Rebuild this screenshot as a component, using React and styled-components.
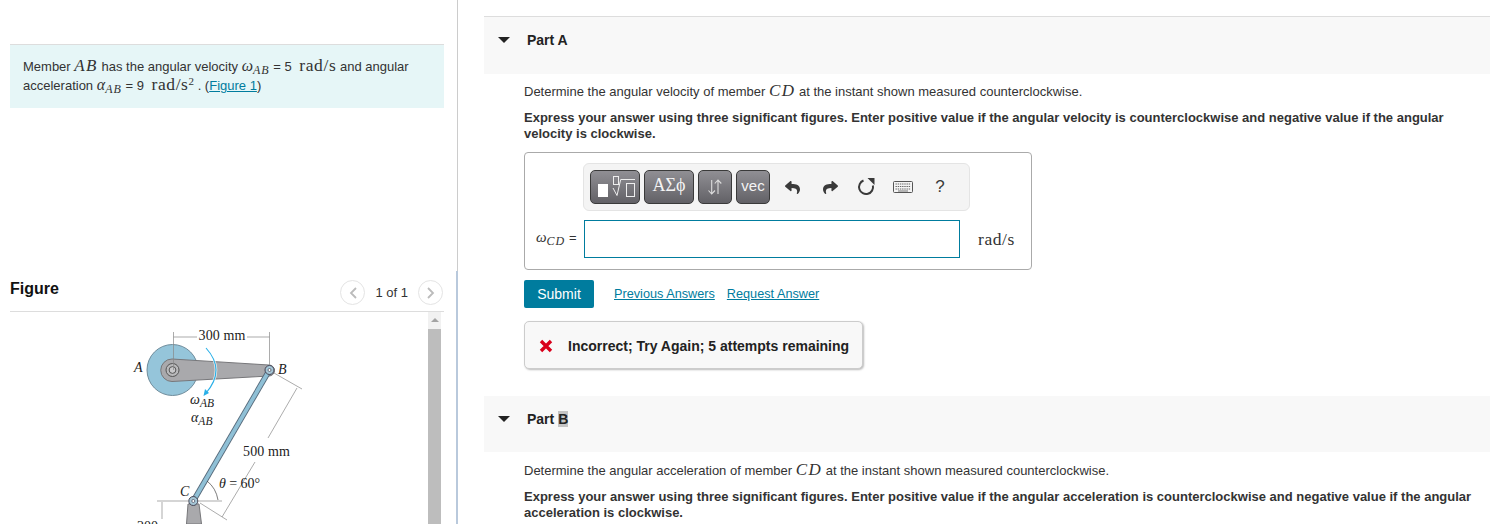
import React from "react";
import styled, { createGlobalStyle } from "styled-components";
import { FaReply, FaShare } from "react-icons/fa";

const GlobalStyle = createGlobalStyle`
  html, body {
    margin: 0;
    height: 524px;
    overflow: hidden;
    background: #fff;
  }
  body {
    font-family: "Liberation Sans", Arial, sans-serif;
    font-size: 13px;
    color: #333;
  }
`;

const Page = styled.div`
  display: flex;
  width: 1496px;
  height: 524px;
  overflow: hidden;
`;

const LeftColumn = styled.div`
  width: 458px;
  flex: none;
  display: flex;
  flex-direction: column;
  box-sizing: border-box;
  padding: 44px 13px 0 10px;
  border-right: 1px solid #ccc;
  position: relative;
`;

const SplitEdge = styled.div`
  position: absolute;
  right: -1px;
  top: 271px;
  bottom: 0;
  width: 2px;
  background: #b9c9dc;
`;

const ProblemBox = styled.div`
  height: 64px;
  box-sizing: border-box;
  border-top: 1px solid #ddd;
  background: #e6f6f7;
  padding: 12px 13px;
  line-height: 19px;
`;

const FigureHeader = styled.div`
  margin-top: 164px;
  height: 40px;
  display: flex;
  align-items: flex-start;
  justify-content: space-between;
  border-bottom: 1px solid #ddd;
  box-sizing: border-box;
`;

const FigureTitle = styled.div`
  font-size: 16px;
  font-weight: bold;
  color: #111;
  line-height: 34px;
`;

const Pager = styled.div`
  display: flex;
  align-items: center;
  gap: 10px;
  height: 27px;
  margin-top: 7px;
  margin-right: 1px;
  line-height: 27px;
`;

const PagerButton = styled.div`
  width: 25px;
  height: 25px;
  border: 1px solid #e4e4e4;
  border-radius: 50%;
  display: flex;
  align-items: center;
  justify-content: center;
  box-sizing: border-box;
`;

const FigureBody = styled.div`
  flex: 1;
  display: flex;
  min-height: 0;
`;

const FigureCanvas = styled.div`
  flex: 1;
  padding-left: 110px;
`;

const ScrollTrack = styled.div`
  width: 13px;
  margin-right: 3px;
  background: #f1f1f1;
  display: flex;
  flex-direction: column;
  align-items: center;
`;

const ScrollArrow = styled.div`
  margin: 6px 0 7px;
  width: 0;
  height: 0;
  border-left: 4px solid transparent;
  border-right: 4px solid transparent;
  border-bottom: 4px solid #a3a3a3;
`;

const ScrollThumb = styled.div`
  flex: 1;
  width: 13px;
  background: #bdbdbd;
`;

const RightColumn = styled.div`
  flex: 1;
  padding: 16px 6px 0 26px;
  min-width: 0;
`;

const PartHeader = styled.div`
  height: ${(p) => p.$height}px;
  box-sizing: border-box;
  background: #f8f8f8;
  border-top: ${(p) => (p.$ruled ? "1px solid #ddd" : "none")};
  display: flex;
  align-items: flex-start;
  padding-left: 14px;
  padding-top: ${(p) => p.$top}px;
  margin-top: ${(p) => p.$gap || 0}px;
`;

const Caret = styled.div`
  width: 0;
  height: 0;
  margin-top: 6px;
  margin-right: 17px;
  border-left: 6px solid transparent;
  border-right: 6px solid transparent;
  border-top: 6px solid #222;
`;

const PartTitle = styled.div`
  font-size: 14px;
  font-weight: bold;
  line-height: 18px;
  color: #222;
`;

const Highlight = styled.span`
  background: #c4c4c4;
`;

const PartContent = styled.div`
  padding: 0 10px 0 40px;
`;

const Lead = styled.p`
  margin: ${(p) => p.$top}px 0 0;
  line-height: 20px;
`;

const Hint = styled.p`
  margin: ${(p) => p.$top}px 0 0;
  font-weight: bold;
  line-height: 16px;
`;

const AnswerBox = styled.div`
  width: 508px;
  height: 118px;
  margin-top: 10px;
  box-sizing: border-box;
  border: 1px solid #aaa;
  border-radius: 4px;
  padding: 10px 16px 0 11px;
`;

const Toolbar = styled.div`
  width: 387px;
  height: 48px;
  margin-left: 47px;
  box-sizing: border-box;
  background: #f4f4f4;
  border: 1px solid #e4e4e4;
  border-radius: 6px;
  display: flex;
  align-items: center;
  padding-left: 6px;
`;

const ToolButton = styled.div`
  width: ${(p) => p.$width}px;
  height: 34px;
  margin-right: 4px;
  flex: none;
  box-sizing: border-box;
  padding-bottom: ${(p) => (p.$lift ? 3 : 0)}px;
  border: 1px solid #3a3a3a;
  border-radius: 5px;
  background: linear-gradient(#908f94, #626166);
  color: #f4f4f4;
  display: flex;
  align-items: center;
  justify-content: center;
  font-size: ${(p) => p.$size || 15}px;
  font-family: ${(p) => (p.$serif ? '"Liberation Serif", serif' : "inherit")};
`;

const ToolIcon = styled.div`
  width: ${(p) => p.$width}px;
  flex: none;
  display: flex;
  justify-content: center;
  align-items: center;
  color: #3a3a3a;
  font-size: 17px;
`;

const AnswerRow = styled.div`
  display: flex;
  align-items: center;
  margin-top: 9px;
`;

const AnswerLabel = styled.div`
  width: 48px;
  margin-top: -3px;
  white-space: nowrap;
`;

const AnswerInput = styled.div`
  width: 376px;
  height: 38px;
  box-sizing: border-box;
  border: 1px solid #007c9e;
`;

const AnswerUnit = styled.div`
  margin-left: 18px;
  font-family: "Liberation Serif", serif;
  font-size: 17.5px;
  letter-spacing: 0.6px;
`;

const ActionRow = styled.div`
  display: flex;
  align-items: center;
  margin-top: 10px;
`;

const SubmitButton = styled.div`
  width: 70px;
  height: 28px;
  border-radius: 2px;
  background: #007c9e;
  color: #fff;
  font-size: 14px;
  display: flex;
  align-items: center;
  justify-content: center;
  margin-right: 20px;
`;

const ActionLink = styled.a`
  color: #007c9e;
  text-decoration: underline;
  font-size: 12.7px;
  margin-right: 12px;
`;

const Feedback = styled.div`
  width: 339px;
  height: 48px;
  margin-top: 13px;
  box-sizing: border-box;
  display: flex;
  align-items: center;
  padding: 1px 0 0 14px;
  gap: 15px;
  background: #f8f8f8;
  border: 1px solid #ccc;
  border-radius: 5px;
  box-shadow: 1px 1px 2px #bbb;
  font-size: 14px;
  font-weight: bold;
  color: #222;
`;

const MathText = styled.span`
  font-family: "Liberation Serif", serif;
  font-size: ${(p) => p.$size || 17}px;
  font-style: italic;
  letter-spacing: ${(p) => p.$spacing ?? 1.4}px;
  line-height: 0;
`;

const MathUnit = styled.span`
  font-family: "Liberation Serif", serif;
  font-size: 17.5px;
  letter-spacing: 0.6px;
  line-height: 0;
  margin-left: 4px;
`;

const MathSub = styled.sub`
  font-family: "Liberation Serif", serif;
  font-style: italic;
  font-size: 12px;
  letter-spacing: 1px;
  line-height: 0;
  vertical-align: -3px;
`;

const MathSup = styled.sup`
  font-family: "Liberation Serif", serif;
  font-size: 11px;
  line-height: 0;
`;

const FigureLink = styled.a`
  color: #007c9e;
  text-decoration: underline;
`;

const Chevron = ({ dir }) => (
  <svg width="10" height="14" viewBox="0 0 10 14">
    <path
      d={dir === "left" ? "M8 2 L3 7 L8 12" : "M2 2 L7 7 L2 12"}
      fill="none"
      stroke="#bbb"
      strokeWidth="1.8"
    />
  </svg>
);

const TemplateIcon = () => (
  <svg width="48" height="32" viewBox="0 0 48 32" fill="none" stroke="#eee">
    <rect x="7" y="13" width="10" height="13" fill="#fff" stroke="none" />
    <rect x="22.5" y="5.5" width="5" height="8" strokeWidth="1" />
    <path d="M22 17 L26 24.5 L29.7 8.5 H44" strokeWidth="1" />
    <rect x="35.5" y="12.5" width="8" height="13" strokeWidth="1" />
  </svg>
);

const SortIcon = () => (
  <svg width="16" height="18" viewBox="0 0 16 18" fill="none" stroke="#ddd" strokeWidth="1.1">
    <path d="M4.7 2 V16 M1.5 12.5 L4.7 16 L8 12.5" />
    <path d="M11 16 V2 M7.8 5.5 L11 2 L14.3 5.5" />
  </svg>
);

const ResetIcon = () => (
  <svg width="18" height="18" viewBox="0 0 18 18">
    <path d="M6.5 2.5 A7 7 0 1 0 15.9 7.5" fill="none" stroke="#3a3a3a" strokeWidth="2" />
    <path d="M10.5 0 L17.5 0 L17.5 7 Z" fill="#3a3a3a" />
  </svg>
);

const KeyboardIcon = () => (
  <svg width="20" height="12" viewBox="0 0 20 12">
    <rect x="0.5" y="0.5" width="19" height="11" rx="1" fill="#f4f4f4" stroke="#555" />
    <path d="M2.5 3 H17.5 M2.5 5.5 H17.5 M2.5 8 H17.5" stroke="#666" strokeWidth="1.2" strokeDasharray="1.4 0.8" />
    <path d="M5 10 H15" stroke="#777" />
  </svg>
);

const CrossIcon = () => (
  <svg width="14" height="14" viewBox="0 0 14 14">
    <path d="M2 2 L12 12 M12 2 L2 12" stroke="#d9001b" strokeWidth="3.4" />
  </svg>
);

const serif = '"Liberation Serif", serif';

// the mechanism picture, drawn in page coordinates so values read off the screenshot
const MechanismFigure = () => (
  <svg width="190" height="212" viewBox="120 312 190 212" style={{ display: "block" }}>
    <circle cx="172.5" cy="370" r="25.5" fill="#95c5da" stroke="#6f8c9b" />
    <path d="M172 359 L269 365 A5 5 0 0 1 269 376 L172 381.5 A11 11 0 0 1 172 359 Z" fill="#a9a9ac" stroke="#77777a" />
    <circle cx="172.5" cy="370" r="6.5" fill="#b9b9bb" stroke="#555" />
    <circle cx="172.5" cy="370" r="3.4" fill="#c8c8ca" stroke="#555" />
    <path d="M186.5 524 L188 504 H199 L201.5 524 Z" fill="#a9a9ac" stroke="#77777a" />
    <path d="M269.5 370 L193.3 501" stroke="#56697a" strokeWidth="5.6" />
    <path d="M269.5 370 L193.3 501" stroke="#8fc0d6" strokeWidth="3.8" />
    <circle cx="269.5" cy="370" r="4.5" fill="#a5c6d6" stroke="#445" />
    <circle cx="269.5" cy="370" r="1.5" fill="#fff" stroke="#445" strokeWidth="0.7" />
    <circle cx="193.3" cy="501" r="4.5" fill="#a5c6d6" stroke="#445" />
    <circle cx="193.3" cy="501" r="1.5" fill="#fff" stroke="#445" strokeWidth="0.7" />

    <g fill="none" stroke="#888" strokeWidth="0.7">
      <path d="M173.5 332 V370 M269.5 332 V365" />
      <path d="M173.5 337 H197 M247 337 H269.5" />
      <path d="M274 373 L302 389 M200 503 L227 520" />
      <path d="M297 388 L268 438 M255 462 L222 517" />
      <path d="M198 501 H222 M157 501 H189" />
      <path d="M162 502 V519" />
      <path d="M207 481 Q216 488 218 500" stroke="#444" />
    </g>

    <path d="M206 348 Q226 370 206 393" fill="none" stroke="#fff" strokeWidth="2.6" opacity="0.7" />
    <path d="M206 348 Q226 370 206 393" fill="none" stroke="#2ab0e8" strokeWidth="1.1" />
    <path d="M203.5 396 L205 389 L209 393 Z" fill="#2ab0e8" />

    <g fontFamily={serif} fill="#222" fontSize="14">
      <text x="198.5" y="340" textLength="47">300 mm</text>
      <text x="243" y="456" textLength="47">500 mm</text>
      <text x="137" y="531" textLength="46">200 mm</text>
      <text x="219" y="488" textLength="41"><tspan fontStyle="italic">θ</tspan> = 60°</text>
      <g fontStyle="italic">
        <text x="134" y="372">A</text>
        <text x="278" y="374">B</text>
        <text x="180" y="496">C</text>
        <text x="190" y="404" fontSize="14">ω<tspan dy="3" fontSize="11.5">AB</tspan></text>
        <text x="191" y="422" fontSize="14">α<tspan dy="3" fontSize="11.5">AB</tspan></text>
      </g>
    </g>
  </svg>
);

const App = () => (
  <Page>
    <GlobalStyle />
    <LeftColumn>
      <SplitEdge />
      <ProblemBox>
        Member <MathText>AB</MathText> has the angular velocity <MathText $size={16} $spacing={0}>ω</MathText>
        <MathSub>AB</MathSub> = 5 <MathUnit>rad/s</MathUnit> and angular acceleration{" "}
        <MathText $size={16} $spacing={0}>α</MathText>
        <MathSub>AB</MathSub> = 9 <MathUnit>rad/s</MathUnit>
        <MathSup>2</MathSup> . (<FigureLink>Figure 1</FigureLink>)
      </ProblemBox>
      <FigureHeader>
        <FigureTitle>Figure</FigureTitle>
        <Pager>
          <PagerButton>
            <Chevron dir="left" />
          </PagerButton>
          <span>1 of 1</span>
          <PagerButton>
            <Chevron dir="right" />
          </PagerButton>
        </Pager>
      </FigureHeader>
      <FigureBody>
        <FigureCanvas>
          <MechanismFigure />
        </FigureCanvas>
        <ScrollTrack>
          <ScrollArrow />
          <ScrollThumb />
        </ScrollTrack>
      </FigureBody>
    </LeftColumn>

    <RightColumn>
      <PartHeader $height={58} $top={14} $ruled>
        <Caret />
        <PartTitle>Part A</PartTitle>
      </PartHeader>
      <PartContent>
        <Lead $top={8}>
          Determine the angular velocity of member <MathText>CD</MathText> at the instant shown measured counterclockwise.
        </Lead>
        <Hint $top={8}>
          Express your answer using three significant figures. Enter positive value if the angular velocity is counterclockwise and negative value if the angular velocity is clockwise.
        </Hint>
        <AnswerBox>
          <Toolbar>
            <ToolButton $width={50}>
              <TemplateIcon />
            </ToolButton>
            <ToolButton $width={50} $serif $size={18} $lift>ΑΣϕ</ToolButton>
            <ToolButton $width={34}>
              <SortIcon />
            </ToolButton>
            <ToolButton $width={34} $lift>vec</ToolButton>
            <ToolIcon $width={36}>
              <FaReply size={15} />
            </ToolIcon>
            <ToolIcon $width={40}>
              <FaShare size={15} />
            </ToolIcon>
            <ToolIcon $width={32}>
              <ResetIcon />
            </ToolIcon>
            <ToolIcon $width={42}>
              <KeyboardIcon />
            </ToolIcon>
            <ToolIcon $width={32}>?</ToolIcon>
          </Toolbar>
          <AnswerRow>
            <AnswerLabel>
              <MathText $size={15} $spacing={0}>ω</MathText>
              <MathSub>CD</MathSub> =
            </AnswerLabel>
            <AnswerInput />
            <AnswerUnit>rad/s</AnswerUnit>
          </AnswerRow>
        </AnswerBox>
        <ActionRow>
          <SubmitButton>Submit</SubmitButton>
          <ActionLink>Previous Answers</ActionLink>
          <ActionLink>Request Answer</ActionLink>
        </ActionRow>
        <Feedback>
          <CrossIcon />
          Incorrect; Try Again; 5 attempts remaining
        </Feedback>
      </PartContent>
      <PartHeader $height={56} $top={14} $gap={27}>
        <Caret />
        <PartTitle>
          Part <Highlight>B</Highlight>
        </PartTitle>
      </PartHeader>
      <PartContent>
        <Lead $top={9}>
          Determine the angular acceleration of member <MathText>CD</MathText> at the instant shown measured counterclockwise.
        </Lead>
        <Hint $top={8}>
          Express your answer using three significant figures. Enter positive value if the angular acceleration is counterclockwise and negative value if the angular acceleration is clockwise.
        </Hint>
      </PartContent>
    </RightColumn>
  </Page>
);

export default App;
